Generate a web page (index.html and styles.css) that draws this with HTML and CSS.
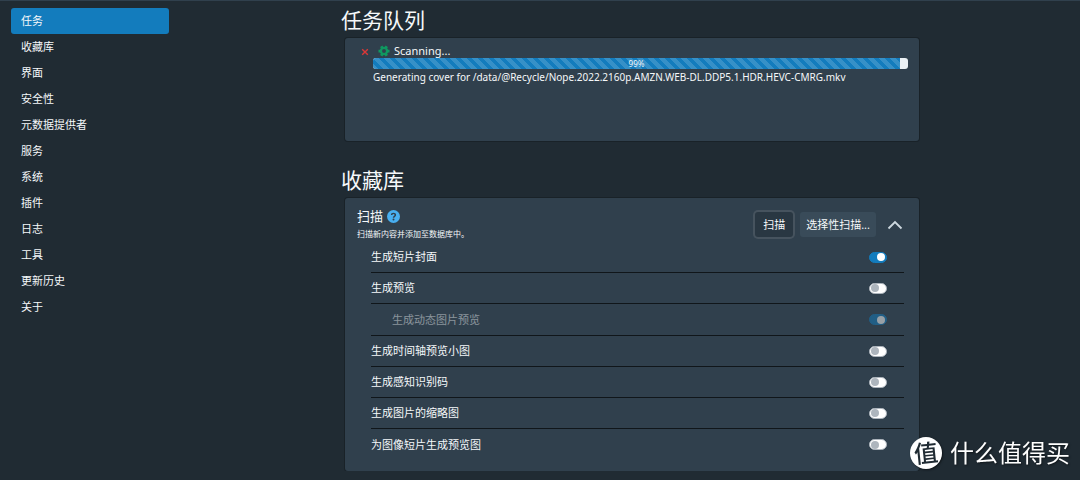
FILE: index.html
```html
<!DOCTYPE html>
<html lang="zh-CN">
<head>
<meta charset="utf-8">
<meta name="viewport" content="width=device-width, initial-scale=1">
<title>任务</title>
<link rel="stylesheet" href="styles.css">
</head>
<body>
<div class="layout">
  <nav class="sidebar">
    <a class="nav-link active" href="#tasks" aria-current="page">任务</a>
    <a class="nav-link" href="#library">收藏库</a>
    <a class="nav-link" href="#interface">界面</a>
    <a class="nav-link" href="#security">安全性</a>
    <a class="nav-link" href="#metadata">元数据提供者</a>
    <a class="nav-link" href="#services">服务</a>
    <a class="nav-link" href="#system">系统</a>
    <a class="nav-link" href="#plugins">插件</a>
    <a class="nav-link" href="#logs">日志</a>
    <a class="nav-link" href="#tools">工具</a>
    <a class="nav-link" href="#changelog">更新历史</a>
    <a class="nav-link" href="#about">关于</a>
  </nav>
  <main class="main">
    <div class="content">
      <section>
        <h1 class="title">任务队列</h1>
        <div class="card queue">
          <button class="stop" type="button" aria-label="停止">
            <svg viewBox="0 0 8 8" width="8" height="8"><path d="M1.2 1.2L6.8 6.8M6.8 1.2L1.2 6.8" fill="none" stroke="currentColor" stroke-width="1.4"/></svg>
          </button>
          <div class="job">
            <div class="job-title">
              <svg class="gear" viewBox="0 0 24 24" width="12" height="12" aria-hidden="true"><g fill="none" stroke="currentColor"><circle cx="12" cy="12" r="6.2" stroke-width="4.600"/><path d="M18 12h5M1 12h5M15 17.200l2.500 4.330M9 6.800L6.500 2.470M9 17.200l-2.500 4.330M15 6.800l2.500-4.330" stroke-width="5.500"/></g></svg>
              <span>Scanning...</span>
            </div>
            <div class="progress" role="progressbar" aria-label="Scanning" aria-valuenow="99" aria-valuemin="0" aria-valuemax="100"><div class="bar" style="width:98.5%">99%</div></div>
            <div class="detail">Generating cover for /data/@Recycle/Nope.2022.2160p.AMZN.WEB-DL.DDP5.1.HDR.HEVC-CMRG.mkv</div>
          </div>
        </div>
      </section>
      <section>
        <h1 class="title">收藏库</h1>
        <div class="card scan">
          <div class="scan-head">
            <div class="scan-text">
              <h2 class="subtitle">扫描
                <a class="help" href="#help" aria-label="帮助"><svg viewBox="0 0 16 16" width="13" height="13"><circle cx="8" cy="8" r="8" fill="#48aff0"/><path d="M5.700 6.200C5.700 3.500 10.400 3.500 10.300 6.200C10.300 7.800 8 7.700 8 9.500" fill="none" stroke="#30404d" stroke-width="1.800"/><circle cx="8" cy="11.700" r="1.200" fill="#30404d"/></svg></a>
              </h2>
              <p class="hint">扫描新内容并添加至数据库中。</p>
            </div>
            <div class="actions">
              <button class="btn focused" type="button">扫描</button>
              <button class="btn" type="button">选择性扫描...</button>
              <button class="collapse" type="button" aria-label="收起"><svg viewBox="0 0 16 10" width="16" height="10"><path d="M1.500 8.500L8 2L14.500 8.500" fill="none" stroke="currentColor" stroke-width="1.800"/></svg></button>
            </div>
          </div>
          <div class="settings">
            <div class="row"><label for="covers">生成短片封面</label><input class="switch" id="covers" type="checkbox" role="switch" checked></div>
            <div class="row"><label for="previews">生成预览</label><input class="switch" id="previews" type="checkbox" role="switch"></div>
            <div class="row nested"><label for="animated">生成动态图片预览</label><input class="switch" id="animated" type="checkbox" role="switch" checked disabled></div>
            <div class="row"><label for="sprites">生成时间轴预览小图</label><input class="switch" id="sprites" type="checkbox" role="switch"></div>
            <div class="row"><label for="phash">生成感知识别码</label><input class="switch" id="phash" type="checkbox" role="switch"></div>
            <div class="row"><label for="thumbs">生成图片的缩略图</label><input class="switch" id="thumbs" type="checkbox" role="switch"></div>
            <div class="row"><label for="clips">为图像短片生成预览图</label><input class="switch" id="clips" type="checkbox" role="switch"></div>
          </div>
        </div>
      </section>
    </div>
  </main>
</div>
<div class="watermark"><span class="badge"><span class="badge-char">值</span></span><span>什么值得买</span></div>
</body>
</html>
```
FILE: styles.css
```css
* { box-sizing: border-box; }

body {
  margin: 0;
  background: #202b33;
  color: #f5f8fa;
  font: 11px/16px "Noto Sans", "Noto Sans CJK SC", sans-serif;
  border-top: 1px solid #30404d;
}

button {
  font: inherit;
  color: inherit;
  background: none;
  border: 0;
  padding: 0;
}

svg { display: block; }

.layout { display: flex; }

.sidebar {
  flex: 0 0 184px;
  display: flex;
  flex-direction: column;
  padding: 7px 15px 0 11px;
}

.nav-link {
  padding: 5px 10px;
  border-radius: 3px;
  color: inherit;
  text-decoration: none;
}

.nav-link.active { background: #137cbd; }

.main {
  flex: 1;
  min-width: 0;
}

.content {
  max-width: 582px;
  margin: 0 auto;
}

.title {
  margin: 0;
  padding: 5px 0 4px;
  font-size: 21px;
  line-height: 28px;
  font-weight: 400;
}

.card {
  margin: 0 4px;
  border-radius: 3px;
  background: #30404d;
  box-shadow: 0 0 0 1px rgba(16, 22, 26, 0.4);
}

.queue {
  display: flex;
  min-height: 103px;
  margin-bottom: 20px;
  padding: 6px 11px 6px 16px;
}

.stop {
  align-self: flex-start;
  width: 12px;
  padding-top: 4px;
  color: #db3737;
}

.job {
  flex: 1;
  min-width: 0;
}

.job-title {
  display: flex;
  align-items: center;
  gap: 4px;
  height: 14px;
  padding-left: 5px;
}

.gear { color: #0f9960; }

.progress {
  height: 11px;
  border-radius: 3px;
  background: #ebf1f5;
  overflow: hidden;
}

.bar {
  height: 100%;
  background: #137cbd linear-gradient(45deg, rgba(255, 255, 255, 0.15) 25%, transparent 25%, transparent 50%, rgba(255, 255, 255, 0.15) 50%, rgba(255, 255, 255, 0.15) 75%, transparent 75%) 0 0 / 11px 11px;
  font-size: 8px;
  line-height: 11px;
  text-align: center;
}

.detail { font-size: 10px; }

.scan { padding: 9px 15px 11px 12px; }

.scan-head {
  display: flex;
  justify-content: space-between;
}

.subtitle {
  display: flex;
  align-items: center;
  gap: 4px;
  margin: 0;
  font-size: 13px;
  line-height: 18px;
  font-weight: 400;
}

.hint {
  margin: 0;
  padding: 3px 0 2px;
  font-size: 8px;
  line-height: 12px;
}

.actions {
  display: flex;
  align-items: center;
  gap: 7px;
}

.btn {
  height: 25px;
  padding: 0 6px;
  border-radius: 3px;
  background: #394b59;
}

.btn.focused {
  padding: 0 8px;
  background: #293742;
  box-shadow: 0 0 0 2px #46535e;
}

.collapse { padding: 0 1px 0 4px; color: #ced9e0; }

.settings { padding-left: 14px; }

.row {
  display: flex;
  align-items: center;
  justify-content: space-between;
  min-height: 31px;
  padding-right: 17px;
  border-bottom: 1px solid #10161a;
}

.row:last-child { border-bottom: 0; }

.row.nested {
  min-height: 32px;
  padding-left: 21px;
}

.nested label { opacity: 0.45; }

.switch {
  appearance: none;
  display: flex;
  align-items: center;
  width: 18px;
  height: 11px;
  margin: 0;
  padding: 0 1px;
  border: 1px solid #adb5bd;
  border-radius: 6px;
  background: #fff;
}

.switch::before {
  content: "";
  width: 8px;
  height: 8px;
  border-radius: 4px;
  background: #adb5bd;
}

.switch:checked {
  justify-content: flex-end;
  border-color: #137cbd;
  background: #137cbd;
}

.switch:checked::before { background: #fff; }

.switch:disabled { opacity: 0.5; }

.watermark {
  position: fixed;
  right: 10px;
  bottom: 11px;
  display: flex;
  align-items: center;
  gap: 8px;
  color: #fff;
  font-size: 24px;
  line-height: 32px;
  text-shadow: 1px 1px 2px #10161a;
}

.badge {
  width: 32px;
  height: 32px;
  border-radius: 50%;
  background: #fff;
  box-shadow: 1px 1px 2px #10161a;
  color: #202b33;
  text-align: center;
  text-shadow: none;
}

.badge-char {
  display: block;
  font-size: 24px;
  font-weight: 500;
  transform: rotate(-6deg);
}
```
